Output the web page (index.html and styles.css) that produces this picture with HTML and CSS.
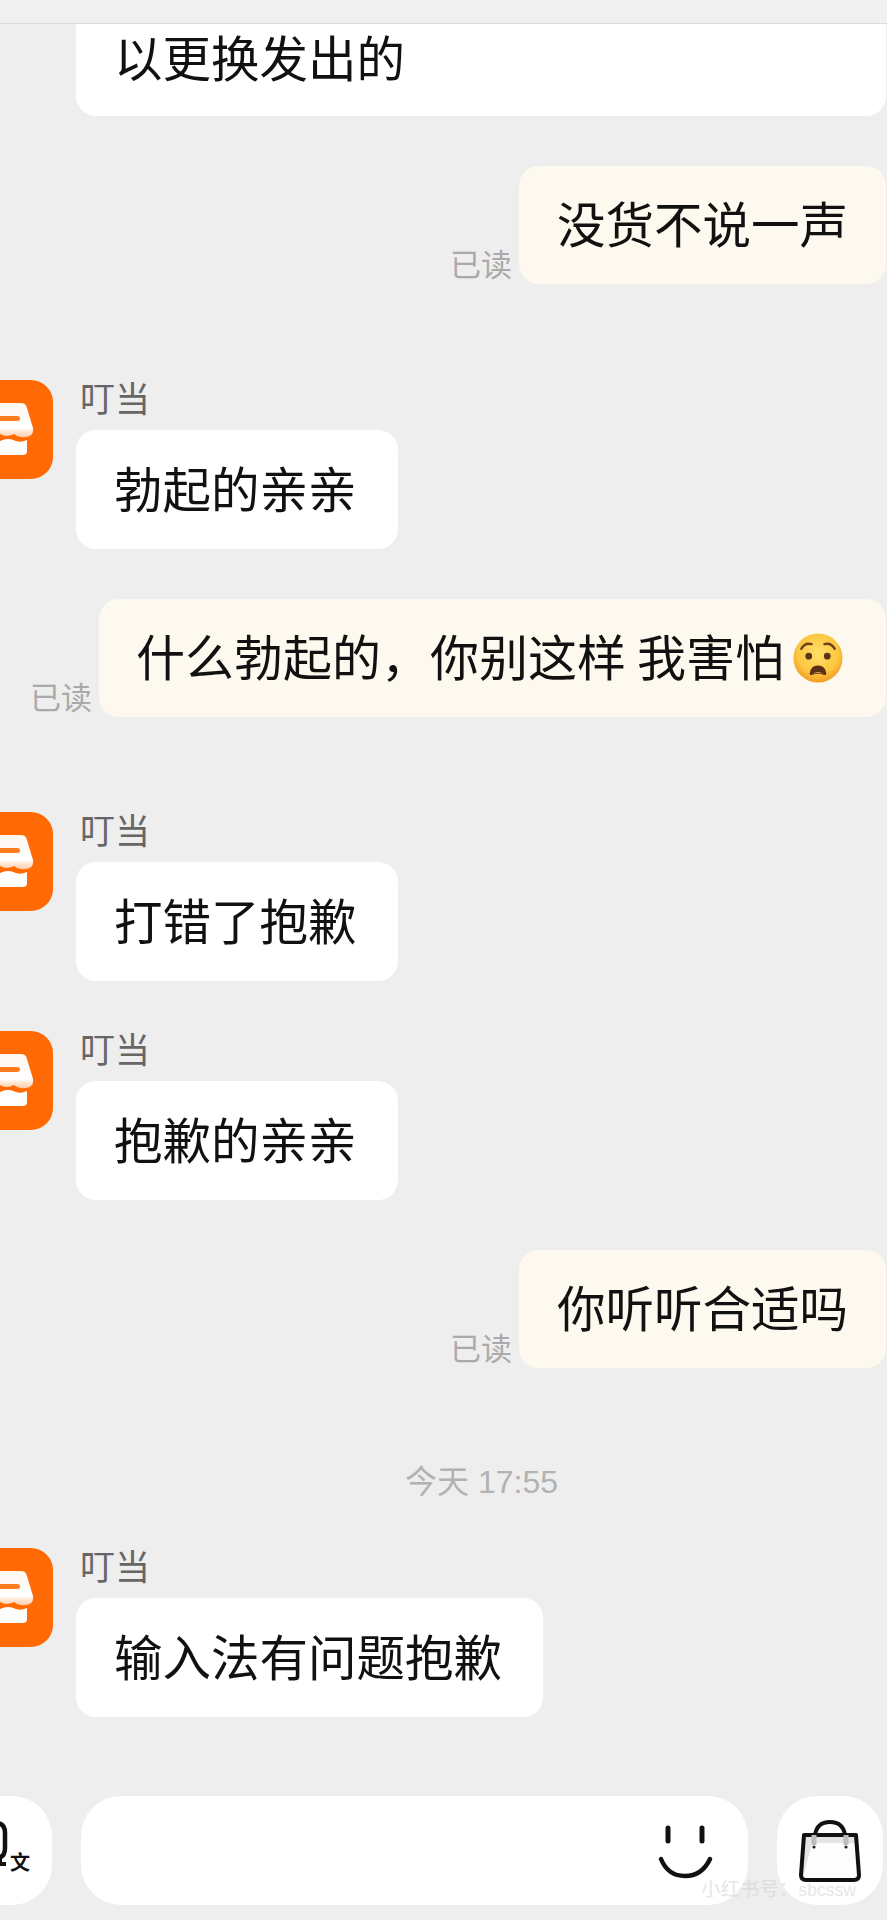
FILE: index.html
```html
<!DOCTYPE html>
<html lang="zh-CN">
<head>
<meta charset="UTF-8" />
<meta name="viewport" content="width=device-width, initial-scale=1" />
<title>叮当</title>
<link rel="stylesheet" href="styles.css">
</head>
<body>

<svg class="defs" width="0" height="0">
  <defs>
    <linearGradient id="shopFace" x1="0" y1="0" x2="0" y2="1">
      <stop offset="0" stop-color="#fff6f0" />
      <stop offset="0.72" stop-color="#ffffff" />
      <stop offset="1" stop-color="#ffc9a3" />
    </linearGradient>
    <symbol id="shopAvatar" viewBox="0 0 99 99">
      <rect width="99" height="99" rx="22" fill="#ff6a04" />
      <path d="M14 23H67Q72 23 73 28L79 48Q80 56 72 57Q65 58 60 54Q52 58 46 54Q38 58 30 54Q22 58 14 54Z" fill="url(#shopFace)" />
      <path d="M14 36H63Q66 36 66 38.500Q66 41 63 41H14Z" fill="#ff7a1c" />
      <path d="M14 63Q24 59 32 62Q40 65 46 61Q54 57 62 61Q67 63 73 60V71Q73 75 69 75H14Z" fill="#fff" />
    </symbol>
  </defs>
</svg>

<div class="topbar"></div>

<main class="chat">
  <div class="msg msg-left msg-cut">
    <div class="bubble bubble-cut">以更换发出的</div>
  </div>

  <div class="msg msg-right gap-50">
    <span class="read">已读</span>
    <div class="bubble bubble-self">没货不说一声</div>
  </div>

  <div class="msg msg-left gap-89">
    <svg class="avatar"><use href="#shopAvatar" /></svg>
    <div class="msg-body">
      <div class="name">叮当</div>
      <div class="bubble">勃起的亲亲</div>
    </div>
  </div>

  <div class="msg msg-right gap-50">
    <span class="read">已读</span>
    <div class="bubble bubble-self bubble-long">什么勃起的，你别这样 我害怕<svg class="emoji" viewBox="0 0 54 54">
        <defs>
          <radialGradient id="faceFill" cx="0.5" cy="0.4" r="0.6">
            <stop offset="0" stop-color="#ffdf6b" />
            <stop offset="0.7" stop-color="#fcc63f" />
            <stop offset="1" stop-color="#f29a26" />
          </radialGradient>
        </defs>
        <circle cx="27" cy="27" r="26.500" fill="url(#faceFill)" />
        <path d="M9 17Q13 10 20 12M45 17Q41 10 34 12" fill="none" stroke="#6b3f1a" stroke-width="2.600" stroke-linecap="round" />
        <circle cx="17" cy="25" r="3.600" fill="#5b3514" />
        <circle cx="37" cy="25" r="3.600" fill="#5b3514" />
        <path d="M18 44Q19 35 27 35Q35 35 36 44Q36 46 33 45Q27 43 21 45Q18 46 18 44Z" fill="#5b3015" />
        <path d="M21 44Q27 40 33 44Q27 42.500 21 44Z" fill="#e8a25a" />
      </svg></div>
  </div>

  <div class="msg msg-left gap-88">
    <svg class="avatar"><use href="#shopAvatar" /></svg>
    <div class="msg-body">
      <div class="name">叮当</div>
      <div class="bubble">打错了抱歉</div>
    </div>
  </div>

  <div class="msg msg-left gap-43">
    <svg class="avatar"><use href="#shopAvatar" /></svg>
    <div class="msg-body">
      <div class="name">叮当</div>
      <div class="bubble">抱歉的亲亲</div>
    </div>
  </div>

  <div class="msg msg-right gap-50">
    <span class="read">已读</span>
    <div class="bubble bubble-self">你听听合适吗</div>
  </div>

  <div class="time">今天 17:55</div>

  <div class="msg msg-left gap-39">
    <svg class="avatar"><use href="#shopAvatar" /></svg>
    <div class="msg-body">
      <div class="name">叮当</div>
      <div class="bubble">输入法有问题抱歉</div>
    </div>
  </div>
</main>

<footer class="inputbar">
  <div class="tile tile-left">
    <svg class="voice-icon" viewBox="0 0 30 50">
      <path d="M-14 3H-4Q5 3 5 13V28Q5 38 -4 38H-14" fill="none" stroke="#111" stroke-width="4.500" />
      <path d="M0 38V44H6" fill="none" stroke="#111" stroke-width="4" />
    </svg>
    <span class="wen">文</span>
  </div>
  <div class="input-box">
    <svg class="smile" viewBox="0 0 56 56">
      <path d="M11 5V18M45 5V18" fill="none" stroke="#111" stroke-width="5" stroke-linecap="round" />
      <path d="M4 36Q11 53 28 53Q45 53 53 36" fill="none" stroke="#111" stroke-width="4.500" stroke-linecap="round" />
    </svg>
  </div>
  <div class="tile tile-right">
    <svg class="bag" viewBox="0 0 64 64">
      <path d="M6 14H58L62 58H2Z" fill="#e4e4e4" />
      <path d="M14 24H58L60 58H5Z" fill="#fdfdfd" />
      <path d="M6 16H58L61 56Q61 61 56 61H8Q3 61 3 56Z" fill="none" stroke="#111" stroke-width="4" stroke-linejoin="round" />
      <path d="M17 16Q19 3 32 3Q45 3 47 16" fill="none" stroke="#111" stroke-width="4" />
      <path d="M16 16V26M48 16V26" stroke="#bbb" stroke-width="5" />
      <circle cx="16" cy="28" r="1.600" fill="#222" />
      <circle cx="48" cy="28" r="1.600" fill="#222" />
    </svg>
  </div>
</footer>

<div class="watermark">小红书号：<span class="watermark-id">sbcssw</span></div>

</body>
</html>
```

FILE: styles.css
```css
html, body {
  margin: 0;
  padding: 0;
}
body {
  position: relative;
  width: 887px;
  height: 1920px;
  overflow: hidden;
  background: #eeeeee;
  font-family: "Noto Sans CJK SC", "Noto Sans", sans-serif;
  color: #111;
}
.defs {
  display: block;
  height: 0;
}
.topbar {
  height: 23px;
  background: #f0f0f0;
  border-bottom: 1px solid #dcdcdc;
}
.chat {
  display: flex;
  flex-direction: column;
}
.msg {
  display: flex;
}
.msg-left {
  justify-content: flex-start;
  gap: 23px;
}
.msg-right {
  justify-content: flex-end;
  align-items: flex-end;
  gap: 7px;
  padding-right: 1px;
}
.msg-cut {
  padding-left: 76px;
}
.gap-39 { margin-top: 39px; }
.gap-43 { margin-top: 43px; }
.gap-50 { margin-top: 50px; }
.gap-88 { margin-top: 88px; }
.gap-89 { margin-top: 89px; }

.avatar {
  flex: none;
  width: 99px;
  height: 99px;
  margin: 7px 0 0 -46px;
}
.name {
  height: 50px;
  font-size: 35px;
  line-height: 48px;
  color: #666;
  padding-left: 4px;
}
.msg-body {
  display: flex;
  flex-direction: column;
  gap: 7px;
  align-items: flex-start;
}
.bubble {
  display: flex;
  align-items: center;
  box-sizing: border-box;
  height: 119px;
  padding: 0 41px 5px 38px;
  background: #fff;
  border-radius: 20px;
  font-size: 48.500px;
  line-height: 64px;
  white-space: pre;
}
.bubble-cut {
  width: 810px;
  height: 92px;
  padding-bottom: 0;
  align-items: flex-start;
  border-radius: 0 0 20px 20px;
}
.bubble-self {
  height: 118px;
  padding-left: 38px;
  padding-right: 38px;
  padding-bottom: 6px;
  background: #fdf9ee;
}
.bubble-long {
  padding-left: 37px;
  padding-right: 36px;
  font-size: 49px;
}
.read {
  padding-bottom: 2px;
  font-size: 31px;
  line-height: 38px;
  color: #aaa;
}
.emoji {
  flex: none;
  width: 50px;
  height: 50px;
  margin: 6px 7px 0 9px;
}
.time {
  margin-top: 94px;
  padding-left: 405px;
  font-family: "Liberation Sans", "Noto Sans CJK SC", sans-serif;
  font-size: 32px;
  line-height: 40px;
  color: #b2b2b2;
}

.inputbar {
  display: flex;
  gap: 29px;
  margin-top: 79px;
  height: 109px;
}
.tile {
  display: flex;
  flex: none;
  position: relative;
  width: 106px;
  background: #fff;
  border-radius: 40px;
}
.tile-left {
  margin-left: -54px;
}
.tile-right {
  align-items: center;
  justify-content: center;
}
.input-box {
  display: flex;
  flex: none;
  align-items: center;
  justify-content: flex-end;
  box-sizing: border-box;
  width: 667px;
  padding-right: 35px;
  background: #fff;
  border-radius: 40px;
}
.voice-icon {
  position: absolute;
  left: 54px;
  top: 24px;
  width: 30px;
  height: 50px;
  overflow: visible;
}
.wen {
  position: absolute;
  left: 64px;
  top: 52px;
  font-size: 20px;
  line-height: 28px;
  font-weight: 700;
  color: #111;
}
.smile {
  width: 56px;
  height: 56px;
}
.bag {
  width: 64px;
  height: 64px;
  margin-top: 1px;
}
.watermark {
  position: absolute;
  left: 701px;
  top: 1876px;
  font-family: "Noto Sans CJK SC", sans-serif;
  font-size: 19.500px;
  line-height: 24px;
  color: rgba(205, 205, 205, 0.5);
}
.watermark-id {
  font-family: "Liberation Sans", sans-serif;
  font-size: 17.500px;
}
```
